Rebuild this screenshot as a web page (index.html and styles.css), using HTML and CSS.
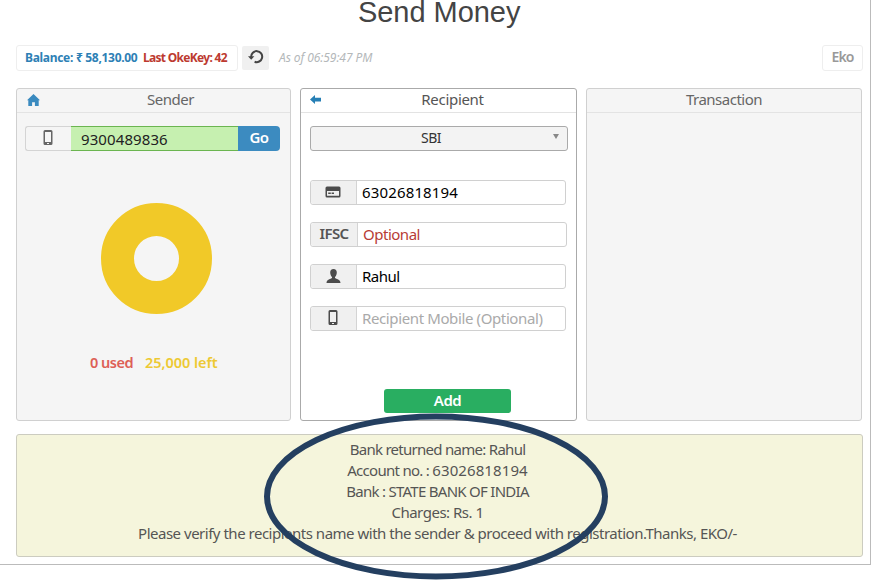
FILE: index.html
```
<!DOCTYPE html>
<html lang="en">
<head>
<meta charset="utf-8">
<title>Send Money</title>
<link rel="stylesheet" href="styles.css">
</head>
<body>
<main class="frame">
  <h1 class="title">Send Money</h1>
  <header class="toolbar">
    <div class="balance"><span class="blue">Balance: ₹ 58,130.00</span><span class="key">Last OkeKey: 42</span></div>
    <button class="refresh" aria-label="Refresh"><svg width="16" height="14" viewBox="0 0 16 14"><path d="M3.2 7A5.500 5.500 0 1 1 6.600 11.700" fill="none" stroke="#444" stroke-width="2"/><path d="M0 6.200h6.400L3.200 9.800z" fill="#444"/></svg></button>
    <span class="asof">As of 06:59:47 PM</span>
    <div class="eko">Eko</div>
  </header>
  <div class="columns">
    <section class="panel sender">
      <div class="head"><svg class="nav" width="13" height="12" viewBox="0 0 13 12"><path d="M6.500 0 13 6.300h-1.300V12H7.900V8.300H5.100V12H1.300V6.300H0z" fill="#3a8abf"/></svg><span class="name">Sender</span></div>
      <div class="lookup">
        <span class="icon"><svg width="10" height="15" viewBox="0 0 10 15"><path fill-rule="evenodd" d="M2 0h6a1.500 1.500 0 0 1 1.500 1.500v12A1.500 1.500 0 0 1 8 15H2A1.500 1.500 0 0 1 .5 13.500v-12A1.500 1.500 0 0 1 2 0zm0 2v10h6V2zm2 11v1h2v-1z" fill="#666"/></svg></span>
        <span class="phone">9300489836</span>
        <button class="go">Go</button>
      </div>
      <div class="donut"></div>
      <div class="usage"><span class="used">0 used</span><span class="left">25,000 left</span></div>
    </section>
    <section class="panel recipient">
      <div class="head"><svg class="nav" width="11" height="9" viewBox="0 0 11 9"><path d="M0 4.500 5 0v2.700h6v3.700H5V9z" fill="#267fb5"/></svg><span class="name">Recipient</span></div>
      <div class="bank"><span>SBI</span><i class="caret"></i></div>
      <div class="field"><span class="icon"><svg width="16" height="12" viewBox="0 0 16 12"><path fill-rule="evenodd" d="M2 .5h12A1.500 1.500 0 0 1 15.500 2v8a1.500 1.500 0 0 1-1.500 1.500H2A1.500 1.500 0 0 1 .5 10V2A1.500 1.500 0 0 1 2 .5zM2 5v4.800h12V5zM3.200 6.500h2.600v1.500H3.200zm3.400 0h2.400v1.500H6.600z" fill="#4c4c4c"/></svg></span><span class="value digits">63026818194</span></div>
      <div class="field ifsc"><span class="icon">IFSC</span><span class="value">Optional</span></div>
      <div class="field"><span class="icon"><svg width="15" height="14" viewBox="0 0 15 14"><path d="M7.500 0c2.200 0 3.300 1.500 3.300 3.500 0 1.800-.7 3.600-1.800 4.400v1.200c1 .9 5.500 1.400 5.500 4.900H.5C.5 10.500 5 10 6 9.100V7.900C4.900 7.100 4.200 5.300 4.200 3.500 4.200 1.500 5.300 0 7.500 0z" fill="#4c4c4c"/></svg></span><span class="value">Rahul</span></div>
      <div class="field"><span class="icon"><svg width="10" height="15" viewBox="0 0 10 15"><path fill-rule="evenodd" d="M2 0h6a1.500 1.500 0 0 1 1.500 1.500v12A1.500 1.500 0 0 1 8 15H2A1.500 1.500 0 0 1 .5 13.500v-12A1.500 1.500 0 0 1 2 0zm0 2v10h6V2zm2 11v1h2v-1z" fill="#4c4c4c"/></svg></span><span class="value hint">Recipient Mobile (Optional)</span></div>
      <button class="add">Add</button>
    </section>
    <section class="panel transaction"><div class="head"><span class="name">Transaction</span></div></section>
  </div>
  <div class="notice">
    <p class="tight">Bank returned name: Rahul</p>
    <p class="tight">Account no. : <span class="digits">63026818194</span></p>
    <p class="tight">Bank : STATE BANK OF INDIA</p>
    <p>Charges: Rs. 1</p>
    <p>Please verify the recipients name with the sender &amp; proceed with registration.Thanks, EKO/-</p>
  </div>
</main>
<svg class="ring" width="346" height="168" viewBox="0 0 346 168"><ellipse cx="173" cy="83.500" rx="169" ry="80" fill="none" stroke="#243f60" stroke-width="6"/></svg>
</body>
</html>
```
FILE: styles.css
```
* { box-sizing: border-box; }
body { margin: 0; position: relative; height: 581px; overflow: hidden; background: #fff; color: #555; font: 15px/21px "Noto Sans", sans-serif; letter-spacing: -0.49px; }
button { border: 0; padding: 0; font: inherit; letter-spacing: inherit; color: inherit; }
p { margin: 0; }
.digits { letter-spacing: 0.15px; }
.frame { width: 871px; height: 565px; border-right: 1px solid #bbb; border-bottom: 1px solid #bbb; padding-left: 16px; }
.title { margin: 0 0 0 342px; height: 45px; font: 29px/24px "Liberation Sans", sans-serif; letter-spacing: -0.05px; color: #444; }
.toolbar { display: flex; width: 847px; height: 26px; }
.balance { width: 222px; height: 26px; border: 1px solid #eee; border-radius: 3px; padding-left: 8px; display: flex; gap: 6px; font-size: 12px; line-height: 24px; font-weight: 700; letter-spacing: -0.3px; white-space: nowrap; }
.blue { color: #2d80b5; width: 112px; }
.key { color: #bd3a30; letter-spacing: -0.7px; }
.refresh { width: 27px; height: 24px; margin: 1px 0 0 4px; background: #f0f0f0; border-radius: 2px; display: grid; place-items: center; }
.refresh svg { margin-top: -2px; }
.asof { margin-left: 10px; font-size: 12px; line-height: 26px; font-style: italic; color: #b4b8ba; letter-spacing: -0.08px; }
.eko { margin-left: auto; width: 41px; height: 26px; border: 1px solid #eee; border-radius: 3px; text-align: center; line-height: 22px; font-size: 14px; font-weight: 600; letter-spacing: -0.9px; color: #999; }
.columns { display: grid; grid-template-columns: 275px 277px 276px; column-gap: 9px; margin-top: 17px; height: 333px; }
.panel { border: 1px solid #d0d0d0; border-radius: 3px; background: #f5f5f5; }
.recipient { background: #fff; border-color: #aaa; }
.head { position: relative; height: 24px; border-bottom: 1px solid #e3e3e3; text-align: center; line-height: 21px; color: #666; }
.sender .name { position: relative; left: 17px; }
.recipient .name { position: relative; left: 14px; color: #555; letter-spacing: -0.3px; }
.nav { position: absolute; left: 10px; top: 5px; }
.recipient .nav { left: 9px; top: 6px; }
.lookup { display: flex; margin: 13px 0 0 8px; width: 255px; height: 25px; }
.icon { width: 46px; display: grid; place-items: center; background: #f0f0f0; border-right: 1px solid #d4d4d4; border-radius: 3px 0 0 3px; }
.icon svg { margin: -2px 1px 0 0; }
.lookup .icon { border: 1px solid #d4d4d4; border-right: 0; background: #f5f5f5; }
.phone { flex: 1; background: #c6f0b0; border: solid #6bb550; border-width: 1px 0; padding-left: 10px; line-height: 24px; color: #222; letter-spacing: 0.1px; }
.go { width: 42px; padding-bottom: 3px; background: #3c8bc0; color: #fff; font-weight: 600; border-radius: 0 4px 4px 0; line-height: 22px; }
.donut { margin: 52px 0 0 84px; width: 111px; height: 111px; border: 33px solid #f1c928; border-radius: 50%; }
.usage { display: flex; gap: 12px; margin: 38px 0 0 73px; font-weight: 600; font-size: 14.500px; }
.used { color: #dd6056; width: 43px; white-space: nowrap; }
.left { color: #edc933; letter-spacing: -0.05px; }
.bank { position: relative; margin: 13px 0 29px 9px; width: 258px; height: 25px; border: 1px solid #aaa; border-radius: 3px; background: #f3f3f3; text-align: center; line-height: 22px; padding-right: 16px; font-size: 14px; color: #333; }
.caret { position: absolute; right: 8px; top: 7px; border: solid transparent; border-width: 5px 3.500px 0; border-top-color: #888; }
.field { display: flex; width: 256px; height: 25px; margin: 0 0 17px 9px; border: 1px solid #d0d0d0; border-radius: 3px; line-height: 23px; }
.value { padding-left: 5px; color: #000; white-space: nowrap; }
.ifsc { width: 257px; }
.ifsc .icon { width: 47px; line-height: 20px; padding-bottom: 3px; font-weight: 600; font-size: 15px; letter-spacing: -0.6px; }
.ifsc .value { color: #b73c35; }
.value.hint { color: #aaa; letter-spacing: -0.38px; }
.add { display: block; width: 127px; height: 24px; padding-bottom: 2px; margin: 58px 0 0 83px; background: #29ae61; border-radius: 3px; color: #fff; font-weight: 600; line-height: 22px; }
.notice { width: 847px; height: 123px; margin-top: 13px; padding: 4px 4px 0 0; border: 1px solid #ccccc0; border-radius: 3px; background: #f5f5dc; text-align: center; }
.notice .tight { letter-spacing: -0.72px; }
.notice .digits { letter-spacing: 0.1px; }
.ring { position: absolute; left: 263px; top: 413px; }
```
